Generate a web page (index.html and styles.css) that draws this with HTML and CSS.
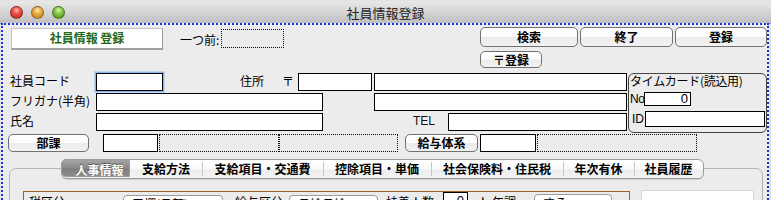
FILE: index.html
```html
<!DOCTYPE html>
<html lang="ja">
<head>
<meta charset="utf-8">
<title>社員情報登録</title>
<link rel="stylesheet" href="styles.css">
</head>
<body>
<div class="window">
  <div class="titlebar">
    <div class="lights">
      <span class="light red"></span>
      <span class="light yellow"></span>
      <span class="light green"></span>
    </div>
    <div class="title">社員情報登録</div>
    <div></div>
  </div>
  <div class="content">
    <div class="hdr">
      <div class="title-box">社員情報 登録</div>
      <div class="prev-label">一つ前:</div>
      <div class="dotted prev-box"></div>
      <div class="btns">
        <div class="btn w-search">検索</div>
        <div class="btn w-end">終了</div>
        <div class="btn w-reg">登録</div>
      </div>
    </div>
    <div class="row-b">
      <div class="btn zip-btn">〒登録</div>
    </div>
    <div class="main">
      <div class="fields">
        <div class="frow">
          <div class="lbl">社員コード</div>
          <div class="inp focus w-code"></div>
          <div class="txt addr-lbl">住所</div>
          <div class="txt zip-mark">〒</div>
          <div class="inp w-zip"></div>
          <div class="inp w-addr"></div>
        </div>
        <div class="frow">
          <div class="lbl">フリガナ(半角)</div>
          <div class="inp w-name"></div>
          <div class="inp w-addr gap-addr2"></div>
        </div>
        <div class="frow">
          <div class="lbl">氏名</div>
          <div class="inp w-name"></div>
          <div class="txt tel-lbl">TEL</div>
          <div class="inp w-tel"></div>
        </div>
      </div>
      <div class="timecard">
        <div class="tc-title">タイムカード(読込用)</div>
        <div class="tc-no">
          <span class="tc-lbl no-lbl">No</span>
          <div class="inp w-tcno">0</div>
        </div>
        <div class="tc-id">
          <span class="tc-lbl id-lbl">ID</span>
          <div class="inp w-tcid"></div>
        </div>
      </div>
    </div>
    <div class="row6">
      <div class="btn w-dept">部課</div>
      <div class="inp w-dept-code"></div>
      <div class="dotted w-dept-a"></div>
      <div class="dotted w-dept-b"></div>
      <div class="btn w-pay">給与体系</div>
      <div class="inp w-pay-code"></div>
      <div class="dotted w-pay-name"></div>
    </div>
    <div class="tabs">
      <div class="tab sel t1">人事情報</div>
      <div class="tab t2">支給方法</div>
      <div class="tab t3">支給項目・交通費</div>
      <div class="tab t4">控除項目・単価</div>
      <div class="tab t5">社会保険料・住民税</div>
      <div class="tab t6">年次有休</div>
      <div class="tab t7 last">社員履歴</div>
    </div>
    <div class="panel">
      <div class="brown">
        <div class="plbl pl1">税区分</div>
        <div class="sel s1">甲欄(月額)<span class="arr">⌄</span></div>
        <div class="plbl pl2">給与区分</div>
        <div class="sel s2">月給月給<span class="arr">⌄</span></div>
        <div class="plbl pl3">扶養人数</div>
        <div class="inp w-dep">0</div>
        <div class="plbl pl4">人</div>
        <div class="plbl pl5">年調</div>
        <div class="sel s3">する<span class="arr">⌄</span></div>
      </div>
      <div class="whitebox"></div>
    </div>
  </div>
</div>
</body>
</html>
```
FILE: styles.css
```css
* { box-sizing: border-box; }
body {
  margin: 0;
  background: #e2e2e2;
  font-family: "Noto Sans CJK JP", "Noto Sans", sans-serif;
  font-size: 12px;
  color: #000;
}
.window {
  width: 771px;
  height: 200px;
  overflow: hidden;
}
.titlebar {
  height: 23px;
  margin-top: 1px;
  border-radius: 5px 5px 0 0;
  background: linear-gradient(#e8e8e8, #d2d2d2 60%, #bfbfbf);
  border-bottom: 1px solid #9a9a9a;
  display: grid;
  grid-template-columns: 1fr auto 1fr;
  align-items: center;
}
.lights {
  display: flex;
  gap: 8px;
  padding-left: 10px;
  padding-top: 1px;
}
.light {
  width: 13px;
  height: 13px;
  border-radius: 50%;
  border: 1px solid rgba(0,0,0,0.35);
}
.red { background: radial-gradient(circle at 50% 30%, #ffb3a8 0, #e8483c 45%, #b8221a 100%); }
.yellow { background: radial-gradient(circle at 50% 30%, #ffe7a8 0, #e6a53a 45%, #b9761a 100%); }
.green { background: radial-gradient(circle at 50% 30%, #d6f5a8 0, #7cbf3c 45%, #4a8b1c 100%); }
.title {
  font-size: 13px;
  line-height: 16px;
  color: #222;
  padding-top: 1px;
}
.content {
  margin: 0 2px 0 1px;
  height: 177px;
  background: #ececec;
  border: 2px dotted #1d2fe0;
  border-bottom: 0;
  margin-top: -1px;
}
/* header row */
.hdr {
  display: flex;
  height: 23px;
  margin-top: 2px;
}
.title-box {
  margin: 1px 0 0 8px;
  width: 152px;
  height: 22px;
  background: #fff;
  border: 1px solid #c4c4c4;
  border-right-color: #9a9a9a;
  border-bottom: 2px solid #a0a0a0;
  color: #1f6a1f;
  font-weight: bold;
  line-height: 18px;
  text-align: center;
}
.prev-label {
  margin: 4px 0 0 17px;
  width: 41px;
  line-height: 17px;
}
.dotted {
  border: 1px dotted #111;
}
.prev-box {
  width: 63px;
  height: 19px;
  margin-top: 2px;
}
.btns {
  margin-left: auto;
  display: flex;
  gap: 2px;
}
.btn {
  height: 20px;
  border: 1px solid #707070;
  border-radius: 5px;
  background: linear-gradient(#ffffff 0%, #fbfbfb 48%, #ebebeb 52%, #f3f3f3 100%);
  font-weight: bold;
  text-align: center;
  line-height: 17px;
}
.w-search { width: 98px; }
.w-end { width: 93px; }
.w-reg { width: 92px; }
.row-b {
  display: flex;
  margin-top: 1px;
}
.zip-btn {
  margin-left: 477px;
  width: 62px;
  height: 17px;
  line-height: 15px;
}
/* main fields */
.main {
  display: flex;
  margin-top: 5px;
}
.fields {
  width: 624px;
  display: flex;
  flex-direction: column;
  gap: 2px;
}
.frow {
  display: flex;
  height: 18px;
  align-items: flex-start;
}
.lbl {
  width: 93px;
  padding-left: 7px;
  line-height: 16px;
}
.txt { line-height: 16px; }
.inp {
  height: 18px;
  background: #fff;
  border: 1px solid #000;
}
.focus {
  box-shadow: 0 0 0 1px #8fb7e6, 0 0 0 2px #bcd6f2;
}
.w-code { width: 67px; }
.addr-lbl { margin-left: 77px; width: 28px; }
.zip-mark { margin-left: 14px; width: 16px; }
.w-zip { width: 74px; }
.w-addr { width: 253px; margin-left: 2px; }
.w-name { width: 227px; }
.gap-addr2 { margin-left: 51px; }
.tel-lbl {
  margin-left: 90px;
  width: 35px;
  font-family: "Liberation Sans", sans-serif;
  font-size: 12px;
  color: #111;
}
.w-tel { width: 179px; }
.timecard {
  margin-left: 1px;
  width: 139px;
  height: 60px;
  border: 1px solid #444;
  border-radius: 6px;
  display: flex;
  flex-direction: column;
}
.tc-title {
  line-height: 14px;
  padding-left: 1px;
  letter-spacing: -0.3px;
  white-space: nowrap;
}
.tc-no {
  display: flex;
  margin-top: 4px;
  align-items: center;
}
.tc-id {
  display: flex;
  margin-top: 5px;
  align-items: center;
}
.tc-lbl {
  font-family: "Liberation Sans", sans-serif;
  font-size: 12px;
  line-height: 14px;
}
.no-lbl { width: 15px; padding-left: 1px; letter-spacing: -0.5px; }
.id-lbl { width: 16px; padding-left: 3px; }
.w-tcno {
  width: 47px;
  height: 14px;
  text-align: right;
  padding-right: 2px;
  font-family: "Liberation Sans", sans-serif;
  font-size: 13px;
  line-height: 12px;
}
.w-tcid { width: 120px; height: 16px; }
/* row 6 */
.row6 {
  display: flex;
  height: 18px;
  margin-top: 1px;
}
.w-dept { margin-left: 5px; width: 81px; height: 18px; line-height: 15px; }
.w-dept-code { margin-left: 14px; width: 55px; }
.w-dept-a { margin-left: 1px; width: 120px; height: 18px; }
.w-dept-b { width: 119px; height: 18px; }
.w-pay { margin-left: 7px; width: 73px; height: 18px; line-height: 15px; }
.w-pay-code { margin-left: 2px; width: 56px; }
.w-pay-name { margin-left: 1px; width: 160px; height: 18px; }
/* tabs */
.tabs {
  position: relative;
  z-index: 1;
  display: flex;
  margin: 7px 0 0 58px;
  width: 643px;
  height: 20px;
  border: 1px solid #9c9c9c;
  border-radius: 6px;
  background: linear-gradient(#ffffff 0%, #fafafa 50%, #ececec 55%, #f4f4f4 100%);
  box-shadow: 0 1px 0 #cfcfcf;
}
.tab {
  font-weight: bold;
  text-align: center;
  line-height: 17px;
  position: relative;
}
.tab + .tab::before {
  content: "";
  position: absolute;
  left: 0;
  top: 2px;
  bottom: 2px;
  width: 1px;
  background: #c6c6c6;
}
.tab.sel + .tab::before { display: none; }
.sel.tab {
  background: linear-gradient(#a4a4a4, #8a8a8a 50%, #7e7e7e 55%, #8c8c8c);
  color: #fff;
  border-radius: 5px 0 0 5px;
  margin: -1px 0 -1px -1px;
  line-height: 19px;
  text-shadow: 0 -1px 0 #555;
}
.t1 { width: 69px; }
.t2 { width: 72px; }
.t3 { width: 121px; }
.t4 { width: 108px; }
.t5 { width: 132px; }
.t6 { width: 71px; }
.t7 { width: 69px; }
.panel {
  margin: -11px 0 0 6px;
  width: 754px;
  height: 60px;
  border: 1px solid #b4b4b4;
  border-radius: 7px;
  display: flex;
  align-items: flex-start;
  padding-top: 21px;
}
.brown {
  margin: 1px 0 0 13px;
  width: 607px;
  height: 40px;
  border: 1px solid #94661f;
  display: flex;
  align-items: flex-start;
}
.plbl { line-height: 16px; padding-top: 2px; white-space: nowrap; }
.pl1 { margin-left: 5px; width: 94px; }
.pl2 { margin-left: 12px; width: 54px; }
.pl3 { margin-left: 8px; width: 57px; }
.pl4 { margin-left: 9px; width: 15px; }
.pl5 { width: 42px; }
.sel {
  height: 18px;
  background: #fff;
  border: 1px solid #9a9a9a;
  border-radius: 4px;
  padding-left: 8px;
  line-height: 16px;
  position: relative;
  white-space: nowrap;
  overflow: hidden;
}
.arr { position: absolute; right: 5px; top: -2px; color: #555; font-size: 11px; }
.s1 { width: 100px; margin-top: 3px; }
.s2 { width: 89px; margin-top: 3px; }
.s3 { width: 78px; margin-top: 2px; }
.w-dep {
  width: 25px;
  text-align: right;
  padding-right: 3px;
  line-height: 16px;
  font-family: "Liberation Sans", sans-serif;
  font-size: 13px;
}
.whitebox {
  margin-left: 11px;
  width: 113px;
  height: 40px;
  background: #fff;
  border: 1px solid #d8d8d8;
}
```
